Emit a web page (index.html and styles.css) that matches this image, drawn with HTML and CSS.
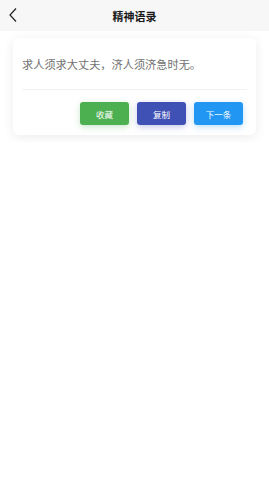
FILE: index.html
```html
<!DOCTYPE html>
<html lang="zh-CN">

<head>
  <meta charset="UTF-8">
  <meta name="viewport" content="width=device-width, initial-scale=1.0">
  <title>精神语录</title>
  <link rel="stylesheet" href="styles.css">
</head>

<body>
  <div class="header">
    <button class="back">
      <svg width="10" height="16" viewBox="0 0 10 16">
        <path d="M8 1.5 L2 8 L8 14.5" fill="none" stroke="#222" stroke-width="1.2" />
      </svg>
    </button>
    <div class="title">精神语录</div>
  </div>
  <div class="page">
    <div class="card">
      <p class="quote">求人须求大丈夫，济人须济急时无。</p>
      <div class="footer">
        <button class="button green">收藏</button>
        <button class="button indigo">复制</button>
        <button class="button blue">下一条</button>
      </div>
    </div>
  </div>
</body>

</html>
```

FILE: styles.css
```css
body {
  margin: 0;
  background-color: #fff;
  font-family: "Noto Sans CJK SC", "Noto Sans", sans-serif;
}

.header {
  position: relative;
  height: 31px;
  background-color: #f7f7f7;
  display: flex;
  justify-content: center;
  align-items: center;
}

.header .back {
  position: absolute;
  left: 6px;
  top: 7px;
  border: none;
  padding: 0 2px;
  background: transparent;
  display: flex;
}

.header .title {
  font-size: 11px;
  font-weight: bold;
  color: #1a1a1a;
}

.page {
  padding: 7px 13px;
}

.card {
  background-color: #fff;
  border-radius: 6px;
  box-shadow: 0 2px 12px 0 rgba(0, 0, 0, 0.08);
  padding: 0 9px 10px;
}

.card .quote {
  margin: 0;
  padding: 16px 0 15px;
  font-size: 11.2px;
  line-height: 20px;
  color: #707070;
  border-bottom: 1px solid #f2f2f2;
}

.card .footer {
  display: flex;
  justify-content: flex-end;
  gap: 8px;
  padding: 12px 4px 0 0;
}

.button {
  width: 49px;
  height: 23px;
  border: none;
  border-radius: 3px;
  color: #fff;
  font-size: 8.5px;
  font-family: "Noto Sans CJK SC", sans-serif;
  padding: 0;
}

.button.green {
  background-color: #4caf50;
  box-shadow: 0 2px 6px rgba(76, 175, 80, 0.3);
}

.button.indigo {
  background-color: #3f51b5;
  box-shadow: 0 2px 6px rgba(63, 81, 181, 0.3);
}

.button.blue {
  background-color: #2196f3;
  box-shadow: 0 2px 6px rgba(33, 150, 243, 0.3);
}
```
